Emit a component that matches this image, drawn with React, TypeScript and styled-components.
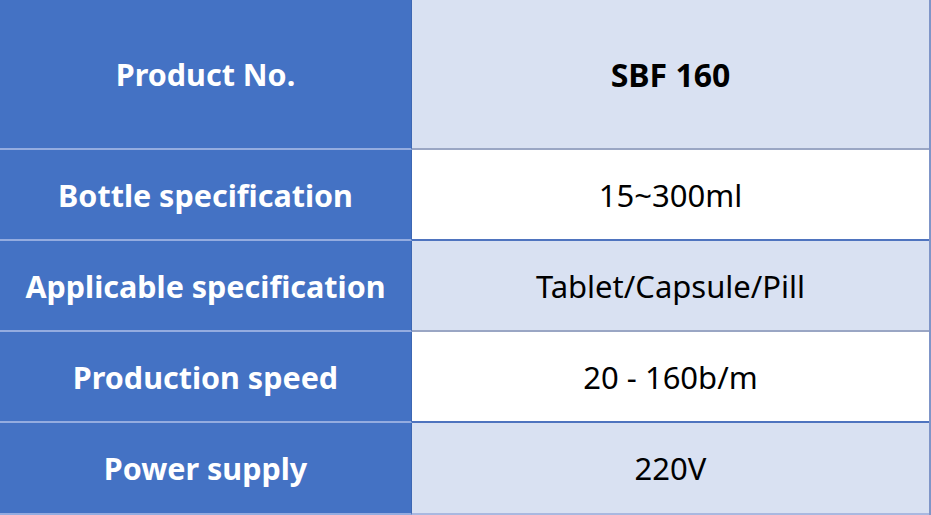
import React from "react";
import styled, { createGlobalStyle } from "styled-components";

const Global = createGlobalStyle`
  html, body { margin: 0; padding: 0; background: #ffffff; }
  body { font-family: "Noto Sans", "Open Sans", sans-serif; }
`;

const Table = styled.div`
  display: grid;
  grid-template-columns: 412px 1fr;
  grid-template-rows: 150px 91px 91px 91px 92px;
  width: 931px;
  height: 515px;
  box-sizing: border-box;
  border-right: 2px solid #7f95c8;
`;

const LabelCell = styled.div`
  background: #4472c4;
  color: #ffffff;
  font-weight: 700;
  font-size: 30.5px;
  display: flex;
  align-items: center;
  justify-content: center;
  box-sizing: border-box;
  border-bottom: 2px solid #94ace0;
  border-right: 1px solid #3d67b3;
`;

const ValueCell = styled.div<{ $shade: boolean; $bold?: boolean; $line: string }>`
  background: ${(p) => (p.$shade ? "#d9e1f2" : "#ffffff")};
  color: #000000;
  font-weight: ${(p) => (p.$bold ? 700 : 400)};
  font-size: ${(p) => (p.$bold ? "32px" : "31px")};
  display: flex;
  align-items: center;
  justify-content: center;
  box-sizing: border-box;
  border-bottom: 2px solid ${(p) => p.$line};
`;

const rows = [
  { label: "Product No.", value: "SBF 160", shade: true, bold: true, line: "#9aa6c4" },
  { label: "Bottle specification", value: "15~300ml", shade: false, line: "#4f74bf" },
  { label: "Applicable specification", value: "Tablet/Capsule/Pill", shade: true, line: "#9aa6c4" },
  { label: "Production speed", value: "20 - 160b/m", shade: false, line: "#4f74bf" },
  { label: "Power supply", value: "220V", shade: true, line: "#a9b8e0" },
];

export default function App() {
  return (
    <>
      <Global />
      <Table>
        {rows.map((r) => (
          <React.Fragment key={r.label}>
            <LabelCell>{r.label}</LabelCell>
            <ValueCell $shade={r.shade} $bold={r.bold} $line={r.line}>
              {r.value}
            </ValueCell>
          </React.Fragment>
        ))}
      </Table>
    </>
  );
}
